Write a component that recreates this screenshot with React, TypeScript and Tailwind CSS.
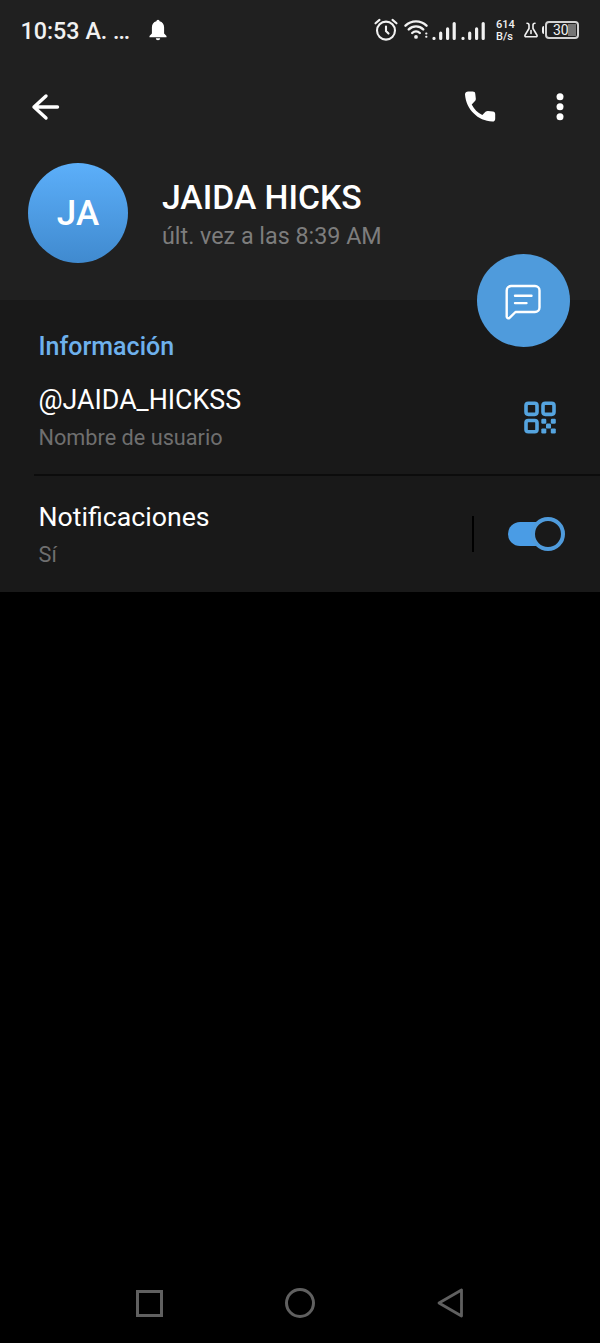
import React, { useState } from "react";

const SignalBars: React.FC = () => (
  <svg width="24" height="22" viewBox="0 0 24 22" stroke="#f1f1f1" strokeWidth="3.2" strokeLinecap="round">
    <path d="M2 18.3v.1M8.7 13.2v5.2M15.6 8.9v9.5M22.2 3.6v14.8" />
  </svg>
);

const StatusBar: React.FC = () => (
  <div className="flex h-[60px] items-center text-[#f1f1f1]">
    <span className="ml-[20.5px] w-[128.5px] pt-[3px] text-[23.3px] leading-none font-medium whitespace-pre">
      10:53 A. <span className="tracking-[-1.2px]">...</span>
    </span>
    {/* Bell */}
    <svg width="18" height="22" viewBox="0 0 18 22" fill="#fff">
      <path d="M7.4 2.3a1.6 1.6 0 0 1 3.2 0c2.9.7 4.5 3.1 4.5 6.100v6.200l2.400 2.400v1.300H.5V17l2.400-2.400V8.400c0-3 1.600-5.400 4.500-6.100zM6.800 19.300h4.400a2.200 2 0 0 1-4.400 0z" />
    </svg>

    <div className="ml-auto flex items-center pr-[21px]">
      {/* Alarm */}
      <svg width="24" height="24" viewBox="0 0 24 24" fill="none" stroke="#f1f1f1" strokeWidth="2.1" strokeLinecap="round">
        <circle cx="12" cy="12.6" r="9" />
        <path d="M12 8.5v4.6l2.5 2.5M1.5 5.3l4-3.4M22.5 5.3l-4-3.4" />
      </svg>
      {/* Wifi */}
      <svg className="ml-[6px]" width="26" height="24" viewBox="0 0 26 24" fill="none" stroke="#f1f1f1" strokeWidth="2.4" strokeLinecap="round">
        <path d="M1.5 7.700a15 15 0 0 1 21 0M4.8 11.400a10.200 10.200 0 0 1 14.400 0M8.200 15a5.500 5.500 0 0 1 7.600 0" />
        <circle cx="12" cy="18.9" r="1.9" fill="#f1f1f1" stroke="none" />
        <path d="M22.100 15.500h.4M22.100 18.700h.4" strokeWidth="1.9" />
      </svg>
      <span className="ml-[2px] flex gap-[5px] pt-[2px]">
        <SignalBars />
        <SignalBars />
      </span>
      <span className="ml-[11px] flex w-[20px] flex-col pt-px text-[11px] leading-[12px] font-medium">
        <span>614</span>
        <span>B/s</span>
      </span>
      {/* Flask */}
      <svg className="ml-[8px]" width="14" height="16" viewBox="0 0 14 16" fill="none" stroke="#f1f1f1" strokeWidth="1.6" strokeLinecap="round" strokeLinejoin="round">
        <path d="M3 1.200c1.700 0 2 .6 2 1.700v3.600L1.100 13c-.5 1 0 1.800 1 1.800h9.800c1 0 1.500-.8 1-1.800L9 6.500V2.900c0-1.100.3-1.700 2-1.700M7 8.500v3" />
      </svg>
      {/* Battery */}
      <span className="ml-[4px] h-[8px] w-[2px] rounded-l-sm bg-[#f1f1f1]" />
      <span className="ml-px flex h-[18px] w-[34px] items-center rounded-[4px] border-2 border-[#d2d2d2] pl-[6px]">
        <span className="w-[15px] text-[14px] leading-none">30</span>
        <span className="h-[12px] w-[8px] bg-[#747474]" />
      </span>
    </div>
  </div>
);

const Toolbar: React.FC = () => (
  <div className="flex h-[94px] items-center pr-[35px] pl-[31px]">
    <button aria-label="Atrás">
      <svg width="30" height="28" viewBox="0 0 30 28" fill="none" stroke="#fff" strokeWidth="3.4" strokeLinecap="round" strokeLinejoin="round">
        <path d="M15 3L3 14l12 11M3 14h23.5" />
      </svg>
    </button>
    <button className="ml-auto" aria-label="Llamar">
      <svg width="32" height="32" viewBox="0 0 32 32" fill="#fff">
        <path d="M4.200.6h4.500c1.500 0 2.500.8 2.600 2.300l.5 4.700c.1 1-.1 1.800-.8 2.500l-3.300 3.300c2.500 4.900 5.700 8.100 10.600 10.700l3.200-3.300c.8-.7 1.600-1 2.600-.9l4.800.5c1.500.2 2.300 1.200 2.300 2.600v4.700c0 1.700-1 3-2.800 2.900C13.900 30.100 2.100 18.400 1 3.600.9 1.900 2.500.6 4.200.6z" />
      </svg>
    </button>
    <button className="ml-[59px]" aria-label="Más opciones">
      <svg width="10" height="28" viewBox="0 0 10 28" fill="#fff">
        <circle cx="5" cy="3.7" r="3.5" />
        <circle cx="5" cy="13.7" r="3.5" />
        <circle cx="5" cy="23.7" r="3.5" />
      </svg>
    </button>
  </div>
);

const QrIcon: React.FC = () => (
  <svg className="mt-[20px] mr-[44px] ml-auto" width="32" height="33" viewBox="0 0 32 33" fill="#55a4df">
    <g fill="none" stroke="#55a4df" strokeWidth="3.6">
      <rect x="2" y="2.2" width="11" height="11.2" rx="2.3" />
      <rect x="19" y="2.2" width="11" height="11.2" rx="2.3" />
      <rect x="2" y="19.5" width="11" height="11.2" rx="2.3" />
    </g>
    <rect x="17.3" y="17.8" width="5" height="5" rx="1.2" />
    <rect x="26.8" y="17.8" width="5" height="5" rx="1.2" />
    <rect x="22" y="22.6" width="5" height="5" rx="1.2" />
    <rect x="17.3" y="27.4" width="5" height="5" rx="1.2" />
    <rect x="26.8" y="27.4" width="5" height="5" rx="1.2" />
  </svg>
);

const App: React.FC = () => {
  const [notifications, setNotifications] = useState(true);

  return (
    <div className="flex h-[1343px] w-[600px] flex-col bg-black font-[Roboto,sans-serif]">
      <header className="relative h-[300px] bg-[#202020]">
        <StatusBar />
        <Toolbar />

        <div className="mt-[9px] flex pl-[28px]">
          <div className="flex size-[100px] items-center justify-center rounded-full bg-linear-to-b from-[#5caffa] to-[#408acf] text-[35px] leading-none font-medium text-white">
            JA
          </div>
          <div className="ml-[34px] pt-[15px]">
            <h1 className="text-[33.7px] leading-[40px] font-medium whitespace-nowrap text-white">JAIDA HICKS</h1>
            <p className="text-[23.3px] leading-[36px] whitespace-nowrap text-[#7d7d7d]">últ. vez a las 8:39 AM</p>
          </div>
        </div>

        {/* Message button sits over the edge of the header */}
        <button
          className="absolute top-[254px] right-[30px] flex size-[93px] items-center justify-center rounded-full bg-[#4f9bdc]"
          aria-label="Mensaje"
        >
          <svg width="38" height="38" viewBox="0 0 38 38" fill="none" stroke="#fff" strokeWidth="2.4" strokeLinecap="round" strokeLinejoin="round">
            <path d="M6 4h24a4.500 4.500 0 0 1 4.500 4.500v17a4.500 4.500 0 0 1-4.500 4.500H10.500l-6 5.800c-1 1-2.800.4-2.800-1V8.500A4.500 4.500 0 0 1 6 4zM10 13.800h16.500M10 21.100h11.500" />
          </svg>
        </button>
      </header>

      <main className="h-[292px] bg-[#191919] pl-[38.5px]">
        <h2 className="pt-[32px] text-[25px] leading-[30px] font-medium text-[#6eb1ed]">Información</h2>

        <div className="mt-[19px] flex h-[93px] items-start">
          <div>
            <p className="text-[26.8px] leading-[38px] text-white">@JAIDA_HICKSS</p>
            <p className="text-[21.7px] leading-[38px] text-[#6f6f6f]">Nombre de usuario</p>
          </div>
          <QrIcon />
        </div>

        <div className="-ml-[5px] h-[2px] bg-[#0c0c0c]" />

        <div className="flex pt-[22px]">
          <div>
            <p className="text-[26.7px] leading-[38px] text-white">Notificaciones</p>
            <p className="text-[21.7px] leading-[38px] text-[#6f6f6f]">{notifications ? "Sí" : "No"}</p>
          </div>
          <div className="mt-[18px] mr-[35px] ml-auto flex h-[36px] items-center">
            <div className="mr-[34px] h-full w-[2px] bg-black" />
            <button
              role="switch"
              aria-checked={notifications}
              aria-label="Notificaciones"
              onClick={() => setNotifications(!notifications)}
              className="flex h-[34px] w-[57px] items-center"
            >
              <span className={`h-[24px] w-[40px] rounded-full ${notifications ? "bg-[#4a9ce5]" : "bg-[#5c5c5c]"}`} />
              <span className="-ml-[17px] size-[34px] rounded-full border-4 border-[#4f9bdc] bg-[#191919]" />
            </button>
          </div>
        </div>
      </main>

      {/* System navigation */}
      <nav className="mt-auto flex h-[80px] items-center pl-[136px]">
        <span className="size-[27px] border-[3px] border-[#606060]" />
        <span className="ml-[122px] size-[30px] rounded-full border-[3px] border-[#606060]" />
        <svg className="ml-[121px]" width="28" height="30" viewBox="0 0 28 30" fill="none" stroke="#606060" strokeWidth="2.8" strokeLinejoin="round">
          <path d="M25.5 2v26L3 15z" />
        </svg>
      </nav>
    </div>
  );
};

export default App;
